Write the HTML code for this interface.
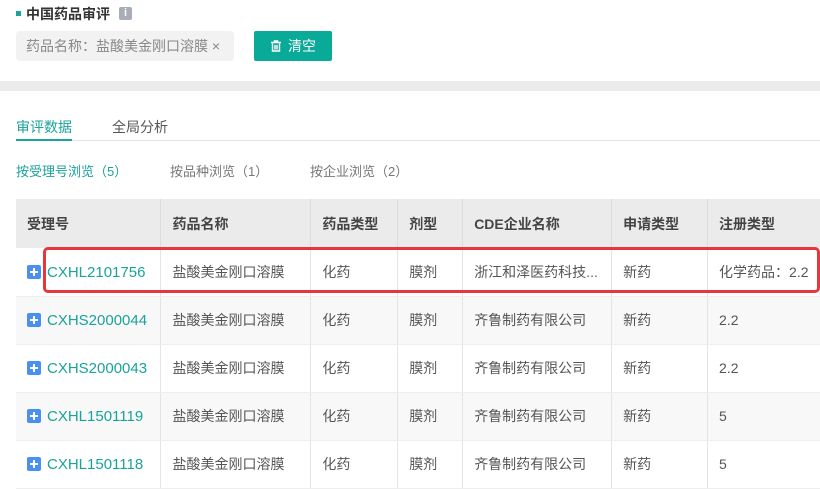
<!DOCTYPE html>
<html><head><meta charset="utf-8"><style>
*{margin:0;padding:0;box-sizing:border-box}
body{width:820px;height:488px;overflow:hidden;background:#fff;font-family:"Liberation Sans","Noto Sans CJK SC",sans-serif;color:#555;font-size:14px;position:relative}
.a{position:absolute}
table{border-collapse:collapse;position:absolute;left:16px;top:199px;width:820px}
td,th{height:48px;padding-left:11px;text-align:left;white-space:nowrap;border-right:1px solid #e4e4e4;font-size:14px}
th{height:49px;background:#ebebeb;color:#444;font-weight:bold;border-right:1px solid #dcdcdc}
tr.g td{background:#f8f8f8}
tr td{border-bottom:1px solid #eee}
.id{color:#1aa29b;font-size:15px;vertical-align:middle}
.pl{display:inline-block;width:14px;height:14px;background:#4a90f0;border-radius:2px;margin-right:6px;vertical-align:middle;position:relative}
.pl:before{content:"";position:absolute;left:3px;top:6px;width:8px;height:2px;background:#fff}
.pl:after{content:"";position:absolute;left:6px;top:3px;width:2px;height:8px;background:#fff}
</style></head><body>
<div class="a" style="left:16px;top:11px;width:5px;height:5px;background:#1aa29b"></div>
<div class="a" style="left:26px;top:4px;font-size:14px;font-weight:bold;color:#333">中国药品审评</div>
<div class="a" style="left:119px;top:7px;width:13px;height:13px;background:#a9adb8;border-radius:2px;color:#fff;font-size:11px;line-height:13px;text-align:center;font-weight:bold">i</div>
<div class="a" style="left:16px;top:31px;width:218px;height:30px;background:#f2f2f2;border-radius:4px;color:#888;font-size:14px;line-height:30px;padding-left:10px">药品名称：盐酸美金刚口溶膜 ×</div>
<div class="a" style="left:254px;top:31px;width:78px;height:30px;background:#0aaa99;border-radius:2px;color:#fff;font-size:14px;line-height:30px;padding-left:16px">
<svg width="12" height="12" viewBox="0 0 12 12" style="vertical-align:-1px;margin-right:6px"><path d="M1 2.5h10M4.5 2.5V1h3v1.5M2.5 3.5V11h7V3.5M5 5v4.5M7 5v4.5" stroke="#fff" stroke-width="1.4" fill="none"/></svg>清空</div>
<div class="a" style="left:0;top:81px;width:820px;height:10px;background:#ebebeb"></div>
<div class="a" style="left:16px;top:117px;color:#1aa29b;font-size:14px">审评数据</div>
<div class="a" style="left:112px;top:117px;color:#555;font-size:14px">全局分析</div>
<div class="a" style="left:16px;top:140px;width:804px;height:1px;background:#e2e2ea"></div>
<div class="a" style="left:16px;top:139px;width:56px;height:2px;background:#1aa29b"></div>
<div class="a" style="left:16px;top:161px;color:#1aa29b;font-size:13px">按受理号浏览（5）</div>
<div class="a" style="left:170px;top:161px;color:#777;font-size:13px">按品种浏览（1）</div>
<div class="a" style="left:310px;top:161px;color:#777;font-size:13px">按企业浏览（2）</div>
<table>
<colgroup><col style="width:145px"><col style="width:150px"><col style="width:87px"><col style="width:65px"><col style="width:149px"><col style="width:96px"><col style="width:128px"></colgroup>
<tr><th>受理号</th><th>药品名称</th><th>药品类型</th><th>剂型</th><th>CDE企业名称</th><th>申请类型</th><th>注册类型</th></tr>
<tr><td><span class="pl"></span><span class="id">CXHL2101756</span></td><td>盐酸美金刚口溶膜</td><td>化药</td><td>膜剂</td><td>浙江和泽医药科技...</td><td>新药</td><td>化学药品：2.2</td></tr>
<tr class="g"><td><span class="pl"></span><span class="id">CXHS2000044</span></td><td>盐酸美金刚口溶膜</td><td>化药</td><td>膜剂</td><td>齐鲁制药有限公司</td><td>新药</td><td>2.2</td></tr>
<tr><td><span class="pl"></span><span class="id">CXHS2000043</span></td><td>盐酸美金刚口溶膜</td><td>化药</td><td>膜剂</td><td>齐鲁制药有限公司</td><td>新药</td><td>2.2</td></tr>
<tr class="g"><td><span class="pl"></span><span class="id">CXHL1501119</span></td><td>盐酸美金刚口溶膜</td><td>化药</td><td>膜剂</td><td>齐鲁制药有限公司</td><td>新药</td><td>5</td></tr>
<tr><td><span class="pl"></span><span class="id">CXHL1501118</span></td><td>盐酸美金刚口溶膜</td><td>化药</td><td>膜剂</td><td>齐鲁制药有限公司</td><td>新药</td><td>5</td></tr>
</table>
<div class="a" style="left:43px;top:247px;width:777px;height:46px;border:3px solid #e8373a;border-radius:5px"></div>
</body></html>
